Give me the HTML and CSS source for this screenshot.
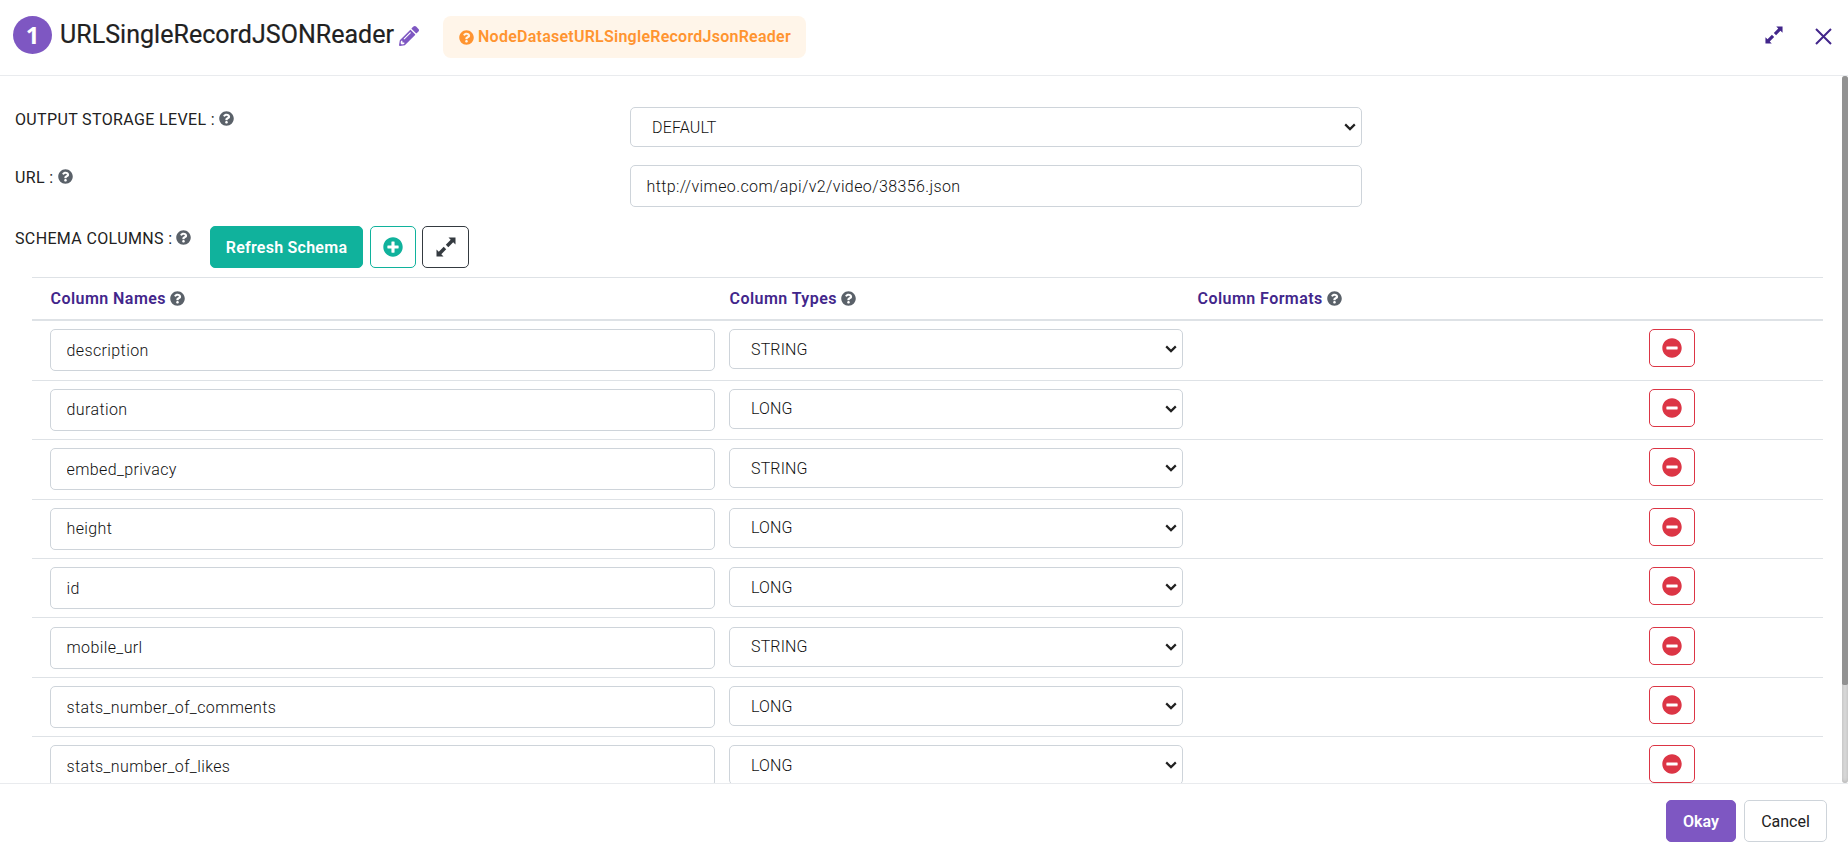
FILE: index.html
```
<!DOCTYPE html>
<html lang="en">
<head>
<meta charset="utf-8">
<title>URLSingleRecordJSONReader</title>
<link rel="stylesheet" href="styles.css">
</head>
<body>
<svg class="sprite" width="0" height="0">
  <symbol id="help" viewBox="0 0 512 512"><path fill="currentColor" d="M504 256c0 136.997-111.043 248-248 248S8 392.997 8 256C8 119.083 119.043 8 256 8s248 111.083 248 248zM262.655 90c-54.497 0-89.255 22.957-116.549 63.758-3.536 5.286-2.353 12.415 2.715 16.258l34.699 26.31c5.205 3.947 12.621 3.008 16.665-2.122 17.864-22.658 30.113-35.797 57.303-35.797 20.429 0 45.698 13.148 45.698 32.958 0 14.976-12.363 22.667-32.534 33.976C247.128 238.528 216 254.941 216 296v4c0 6.627 5.373 12 12 12h56c6.627 0 12-5.373 12-12v-1.333c0-28.462 83.186-29.647 83.186-106.667 0-58.002-60.165-102-116.531-102zM256 338c-25.365 0-46 20.635-46 46 0 25.364 20.635 46 46 46s46-20.636 46-46c0-25.365-20.635-46-46-46z"/></symbol>
  <symbol id="plus" viewBox="0 0 512 512"><path fill="currentColor" d="M256 8C119 8 8 119 8 256s111 248 248 248 248-111 248-248S393 8 256 8zm144 276c0 6.600-5.400 12-12 12h-92v92c0 6.600-5.400 12-12 12h-56c-6.600 0-12-5.400-12-12v-92h-92c-6.600 0-12-5.400-12-12v-56c0-6.600 5.400-12 12-12h92v-92c0-6.600 5.400-12 12-12h56c6.600 0 12 5.400 12 12v92h92c6.600 0 12 5.400 12 12v56z"/></symbol>
  <symbol id="minus" viewBox="0 0 512 512"><path fill="currentColor" d="M256 8C119 8 8 119 8 256s111 248 248 248 248-111 248-248S393 8 256 8zM124 296c-6.600 0-12-5.400-12-12v-56c0-6.600 5.400-12 12-12h264c6.600 0 12 5.400 12 12v56c0 6.600-5.400 12-12 12H124z"/></symbol>
  <symbol id="pencil" viewBox="0 0 512 512"><path fill="currentColor" d="M497.900 142.100l-46.100 46.100c-4.700 4.700-12.300 4.700-17 0l-111-111c-4.700-4.700-4.700-12.300 0-17l46.100-46.100c18.700-18.700 49.100-18.700 67.900 0l60.100 60.100c18.800 18.700 18.800 49.100 0 67.900zM284.200 99.800L21.600 362.400.4 483.900c-2.900 16.400 11.400 30.600 27.800 27.800l121.500-21.300 262.600-262.600c4.700-4.700 4.700-12.300 0-17l-111-111c-4.800-4.700-12.400-4.700-17.100 0zM124.100 339.900c-5.500-5.500-5.500-14.300 0-19.800l154-154c5.500-5.500 14.300-5.500 19.800 0s5.500 14.300 0 19.800l-154 154c-5.500 5.500-14.300 5.500-19.800 0zM88 424h48v36.300l-64.500 11.300-31.100-31.100L51.700 376H88v48z"/></symbol>
  <symbol id="expand" viewBox="0 0 20 20"><path fill="currentColor" d="M12.500 .5H19.500V7.500L17.200 5.300 12.300 10.200 9.800 7.700 14.700 2.800ZM7.500 19.500H.5V12.500L2.800 14.700 7.700 9.800 10.200 12.300 5.300 17.200Z"/><path class="slit" d="M7 7L13 13"/></symbol>
  <symbol id="chevron" viewBox="0 0 12 8"><path class="stroke" d="M1.200 1.400L6 6.100L10.800 1.400"/></symbol>
</svg>
<header class="header">
  <span class="step">1</span>
  <h1 class="title">URLSingleRecordJSONReader</h1>
  <svg class="edit"><use href="#pencil"/></svg>
  <a class="badge"><svg class="help"><use href="#help"/></svg><span>NodeDatasetURLSingleRecordJsonReader</span></a>
  <svg class="maximize"><use href="#expand"/></svg>
  <svg class="close" viewBox="0 0 17 17"><path d="M1 1L16 16M16 1L1 16"/></svg>
</header>
<div class="content">
<main class="body">
  <div class="field field-select">
    <div class="label"><span>OUTPUT STORAGE LEVEL :</span><svg class="help"><use href="#help"/></svg></div>
    <div class="control pick"><span>DEFAULT</span><svg class="chevron"><use href="#chevron"/></svg></div>
  </div>
  <div class="field field-url">
    <div class="label"><span>URL :</span><svg class="help"><use href="#help"/></svg></div>
    <input class="control" value="http://vimeo.com/api/v2/video/38356.json">
  </div>
  <div class="schema">
    <div class="label"><span>SCHEMA COLUMNS :</span><svg class="help"><use href="#help"/></svg></div>
    <button class="btn refresh">Refresh Schema</button>
    <button class="btn add"><svg class="icon"><use href="#plus"/></svg></button>
    <button class="btn enlarge"><svg class="icon"><use href="#expand"/></svg></button>
  </div>
  <div class="table">
    <div class="thead">
      <div class="th"><span>Column Names</span><svg class="help"><use href="#help"/></svg></div>
      <div class="th"><span>Column Types</span><svg class="help"><use href="#help"/></svg></div>
      <div class="th"><span>Column Formats</span><svg class="help"><use href="#help"/></svg></div>
    </div>
    <div class="row"><input class="control" value="description"><div class="control pick"><span>STRING</span><svg class="chevron"><use href="#chevron"/></svg></div><button class="btn remove"><svg class="icon"><use href="#minus"/></svg></button></div>
    <div class="row"><input class="control" value="duration"><div class="control pick"><span>LONG</span><svg class="chevron"><use href="#chevron"/></svg></div><button class="btn remove"><svg class="icon"><use href="#minus"/></svg></button></div>
    <div class="row"><input class="control" value="embed_privacy"><div class="control pick"><span>STRING</span><svg class="chevron"><use href="#chevron"/></svg></div><button class="btn remove"><svg class="icon"><use href="#minus"/></svg></button></div>
    <div class="row"><input class="control" value="height"><div class="control pick"><span>LONG</span><svg class="chevron"><use href="#chevron"/></svg></div><button class="btn remove"><svg class="icon"><use href="#minus"/></svg></button></div>
    <div class="row"><input class="control" value="id"><div class="control pick"><span>LONG</span><svg class="chevron"><use href="#chevron"/></svg></div><button class="btn remove"><svg class="icon"><use href="#minus"/></svg></button></div>
    <div class="row"><input class="control" value="mobile_url"><div class="control pick"><span>STRING</span><svg class="chevron"><use href="#chevron"/></svg></div><button class="btn remove"><svg class="icon"><use href="#minus"/></svg></button></div>
    <div class="row"><input class="control" value="stats_number_of_comments"><div class="control pick"><span>LONG</span><svg class="chevron"><use href="#chevron"/></svg></div><button class="btn remove"><svg class="icon"><use href="#minus"/></svg></button></div>
    <div class="row"><input class="control" value="stats_number_of_likes"><div class="control pick"><span>LONG</span><svg class="chevron"><use href="#chevron"/></svg></div><button class="btn remove"><svg class="icon"><use href="#minus"/></svg></button></div>
  </div>
</main>
<div class="track"><div class="thumb"></div></div>
</div>
<footer class="footer">
  <button class="btn okay">Okay</button>
  <button class="btn cancel">Cancel</button>
</footer>
</body>
</html>
```
FILE: styles.css
```
* { box-sizing: border-box; }
body {
  margin: 0;
  height: 855px;
  overflow: hidden;
  display: flex;
  flex-direction: column;
  font: 400 16px/24px Roboto, sans-serif;
  color: #212529;
  background: #fff;
}
svg { display: block; flex: none; }
.sprite { width: 0; height: 0; position: absolute; }
.help { width: 15px; height: 15px; color: #5a6169; }
.slit { stroke: #fff; stroke-width: 1.6; }
.stroke { fill: none; stroke: #212121; stroke-width: 2.2; }

.header {
  flex: none;
  display: flex;
  align-items: flex-start;
  height: 76px;
  padding: 16px 16px 0 13px;
  border-bottom: 1px solid #e9ebee;
}
.step {
  width: 39px;
  height: 38px;
  border-radius: 50%;
  background: #7e57c2;
  color: #fff;
  font: 700 24px/38px "Noto Sans", sans-serif;
  text-align: center;
}
.title {
  width: 335px;
  margin: 3px 0 0 8px;
  font-size: 25px;
  line-height: 32px;
  font-weight: 400;
  letter-spacing: 0.03px;
  color: #212121;
  -webkit-text-stroke: 0.2px #212121;
  white-space: nowrap;
}
.edit { width: 20px; height: 20px; margin: 10px 0 0 4px; color: #7e57c2; }
.badge {
  display: flex;
  align-items: center;
  gap: 4px;
  width: 363px;
  height: 42px;
  margin-left: 24px;
  padding-left: 16px;
  border-radius: 8px;
  background: #fff5e9;
  color: #ff9430;
  font-weight: 600;
  letter-spacing: 0.25px;
  white-space: nowrap;
}
.badge .help { color: #ff9430; }
.maximize { width: 18px; height: 18px; margin: 10px 32px 0 auto; color: #42268b; }
.close { width: 17px; height: 17px; margin-top: 12px; fill: none; stroke: #42268b; stroke-width: 2; }

.content { flex: 1; display: flex; min-height: 0; overflow: hidden; }
.body { flex: 1; padding: 31px 19px 0 15px; overflow: hidden; }
.track { flex: none; width: 6px; border-radius: 5px; background: #e4e4e4; box-shadow: inset 0 0 5px #aaa; }
.thumb { height: 609px; border-radius: 5px 5px 3px 3px; background: #929292; }

.label { display: flex; align-items: flex-start; gap: 4px; height: 25px; padding-top: 1px; color: #212121; letter-spacing: 0.36px; white-space: nowrap; }
.label .help { margin-top: 3px; }
.field { display: grid; grid-template-columns: 615px 732px; align-items: start; }
.field-select { height: 58px; }
.field-url { height: 61px; }
.control {
  width: 100%;
  height: 42px;
  padding: 0 15.500px;
  border: 1px solid #ced4da;
  border-radius: 5px;
  background: #fff;
  color: #111;
  font: 300 16px Roboto, sans-serif;
  letter-spacing: 0.39px;
  outline: 0;
}
.pick {
  display: flex;
  align-items: center;
  justify-content: space-between;
  height: 40px;
  padding: 0 5px 0 21px;
  letter-spacing: 0.150px;
}
.chevron { width: 12px; height: 8px; }

.btn {
  display: flex;
  align-items: center;
  justify-content: center;
  height: 42px;
  padding: 0;
  border: 1px solid;
  border-radius: 5px;
  background: #fff;
  font: 500 16px Roboto, sans-serif;
}
.icon { width: 20px; height: 20px; }
.schema { display: flex; }
.schema .label { width: 177px; }
.refresh { width: 153px; margin-left: 18px; background: #10b29c; border-color: #10b29c; color: #fff; font-weight: 600; letter-spacing: 0.25px; }
.add { width: 46px; margin-left: 7px; color: #10b29c; }
.enlarge { width: 47px; margin-left: 6px; color: #343a40; }

.table { margin: 9px 0 0 17px; width: 1791px; }
.thead, .row { display: grid; grid-template-columns: 665px 454px 438px 46px; column-gap: 14px; padding-left: 18px; border-top: 1px solid #dee2e6; }
.thead { height: 44.3px; margin-bottom: -1px; border-bottom: 2px solid #dee2e6; }
.th { display: flex; align-items: center; gap: 4px; height: 42px; padding-left: 0.5px; color: #42268b; font-weight: 600; letter-spacing: 0.45px; }
.th .help { margin-top: -1px; }
.row { height: 59.45px; padding-top: 8.100px; align-items: start; }
.row:nth-child(2) { border-top-color: transparent; }
.remove { grid-column: 4; height: 38px; color: #dc3545; }

.footer {
  flex: none;
  display: flex;
  justify-content: flex-end;
  gap: 8px;
  height: 72px;
  padding: 16px 21px 0;
  border-top: 1px solid #e9ebee;
}
.okay { width: 70px; background: #7e57c2; border-color: #7e57c2; color: #fff; font-weight: 600; }
.cancel { width: 83px; border-color: #ced4da; color: #212121; font-weight: 400; }
```
